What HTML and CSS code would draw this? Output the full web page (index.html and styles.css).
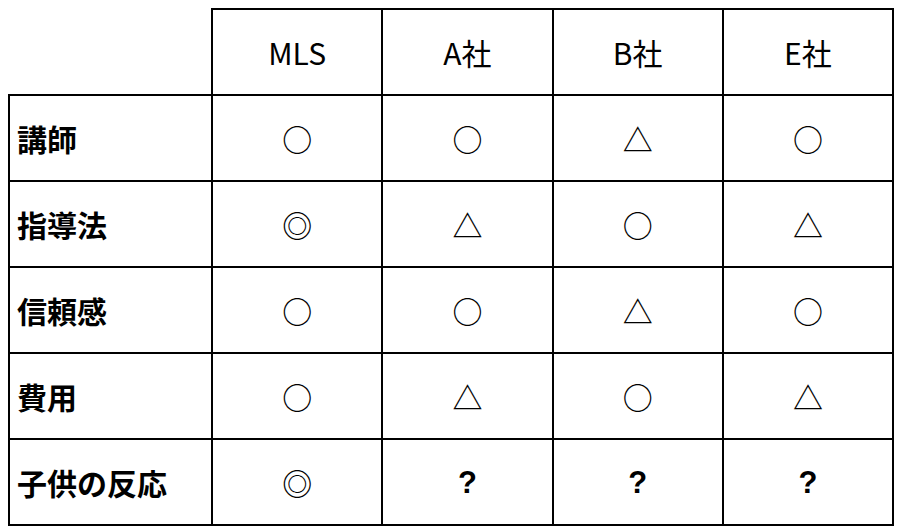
FILE: index.html
```html
<!DOCTYPE html>
<html lang="ja">
<head>
<meta charset="utf-8">
<link rel="stylesheet" href="styles.css">
</head>
<body>
<table class="cmp">
  <thead>
    <tr>
      <th class="corner"></th>
      <th class="co">MLS</th>
      <th class="co">A社</th>
      <th class="co">B社</th>
      <th class="co">E社</th>
    </tr>
  </thead>
  <tbody>
    <tr><th class="lbl">講師</th><td>○</td><td>○</td><td>△</td><td>○</td></tr>
    <tr><th class="lbl">指導法</th><td>◎</td><td>△</td><td>○</td><td>△</td></tr>
    <tr><th class="lbl">信頼感</th><td>○</td><td>○</td><td>△</td><td>○</td></tr>
    <tr><th class="lbl">費用</th><td>○</td><td>△</td><td>○</td><td>△</td></tr>
    <tr><th class="lbl">子供の反応</th><td>◎</td><td class="q">?</td><td class="q">?</td><td class="q">?</td></tr>
  </tbody>
</table>
</body>
</html>
```
FILE: styles.css
```css
html, body {
  margin: 0;
  background: #fff;
}
body {
  padding: 8px;
  font-family: "Noto Sans CJK JP", "Noto Sans", sans-serif;
  color: #000;
}
.cmp {
  border-collapse: collapse;
  table-layout: fixed;
  width: 886px;
}
.cmp th, .cmp td {
  border: 2px solid #000;
  height: 84px;
  padding: 0;
  text-align: center;
  vertical-align: middle;
  font-size: 30px;
  line-height: 1;
}
.cmp .corner {
  width: 202px;
  border-top: hidden;
  border-left: hidden;
}
.cmp .co {
  font-weight: 400;
}
.cmp .lbl {
  text-align: left;
  padding-left: 7px;
  font-weight: 700;
}
.cmp td {
  font-weight: 500;
}
.cmp .q {
  font-family: "Liberation Sans", Arial, sans-serif;
  font-weight: 700;
  font-size: 31px;
}
```
